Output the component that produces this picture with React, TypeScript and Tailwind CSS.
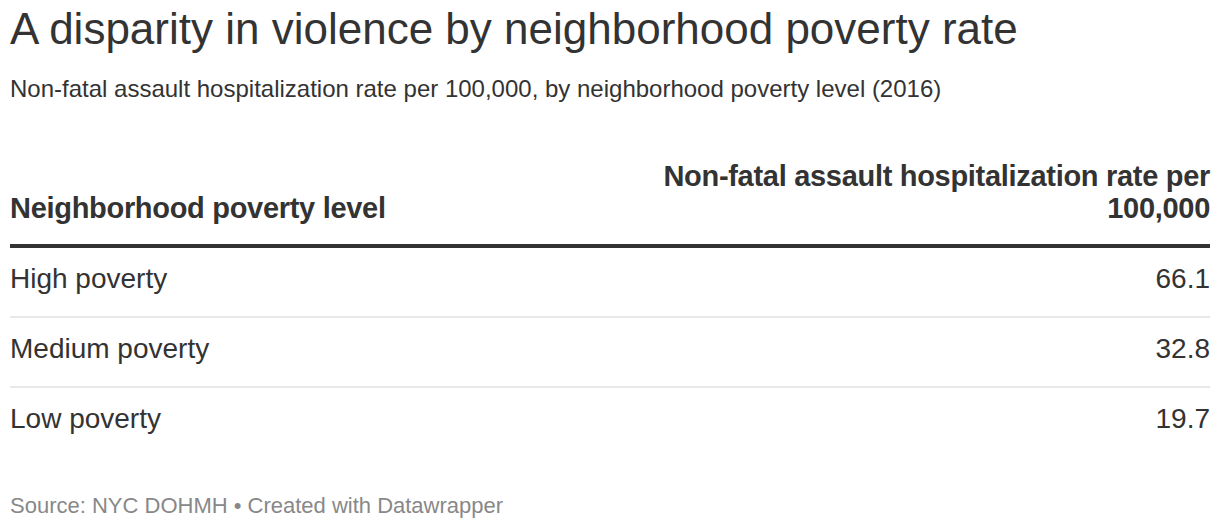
const rows = [
  { label: "High poverty", value: "66.1" },
  { label: "Medium poverty", value: "32.8" },
  { label: "Low poverty", value: "19.7" },
];

export default function App() {
  return (
    <div
      className="w-[1220px] h-[530px] bg-white text-[#333333] px-[10px] pt-[3px]"
      style={{ fontFamily: '"Liberation Sans", Arial, Helvetica, sans-serif' }}
    >
      {/* Headline + description */}
      <h1 className="text-[44px] leading-[52px] font-normal">
        A disparity in violence by neighborhood poverty rate
      </h1>
      <p className="text-[24px] leading-[30px] mt-[19px]">
        Non-fatal assault hospitalization rate per 100,000, by neighborhood poverty level (2016)
      </p>

      {/* Table */}
      <div className="mt-[56px]">
        <div className="flex items-end justify-between border-b-4 border-[#333333] pb-[20px]">
          <div className="text-[29px] leading-[32px] font-bold tracking-[-0.3px]">
            Neighborhood poverty level
          </div>
          <div className="w-[590px] text-right text-[29px] leading-[32px] font-bold tracking-[-0.3px]">
            Non-fatal assault hospitalization rate per 100,000
          </div>
        </div>
        {rows.map((r, i) => (
          <div
            key={r.label}
            className={
              "flex items-start justify-between h-[70px] pt-[15px] text-[28px] leading-[32px] " +
              (i < rows.length - 1 ? "border-b-2 border-[#e8e8e8]" : "")
            }
          >
            <span>{r.label}</span>
            <span>{r.value}</span>
          </div>
        ))}
      </div>

      {/* Footer */}
      <div className="mt-[35px] text-[22px] leading-[26px] text-[#888888]">
        Source: NYC DOHMH • Created with Datawrapper
      </div>
    </div>
  );
}
